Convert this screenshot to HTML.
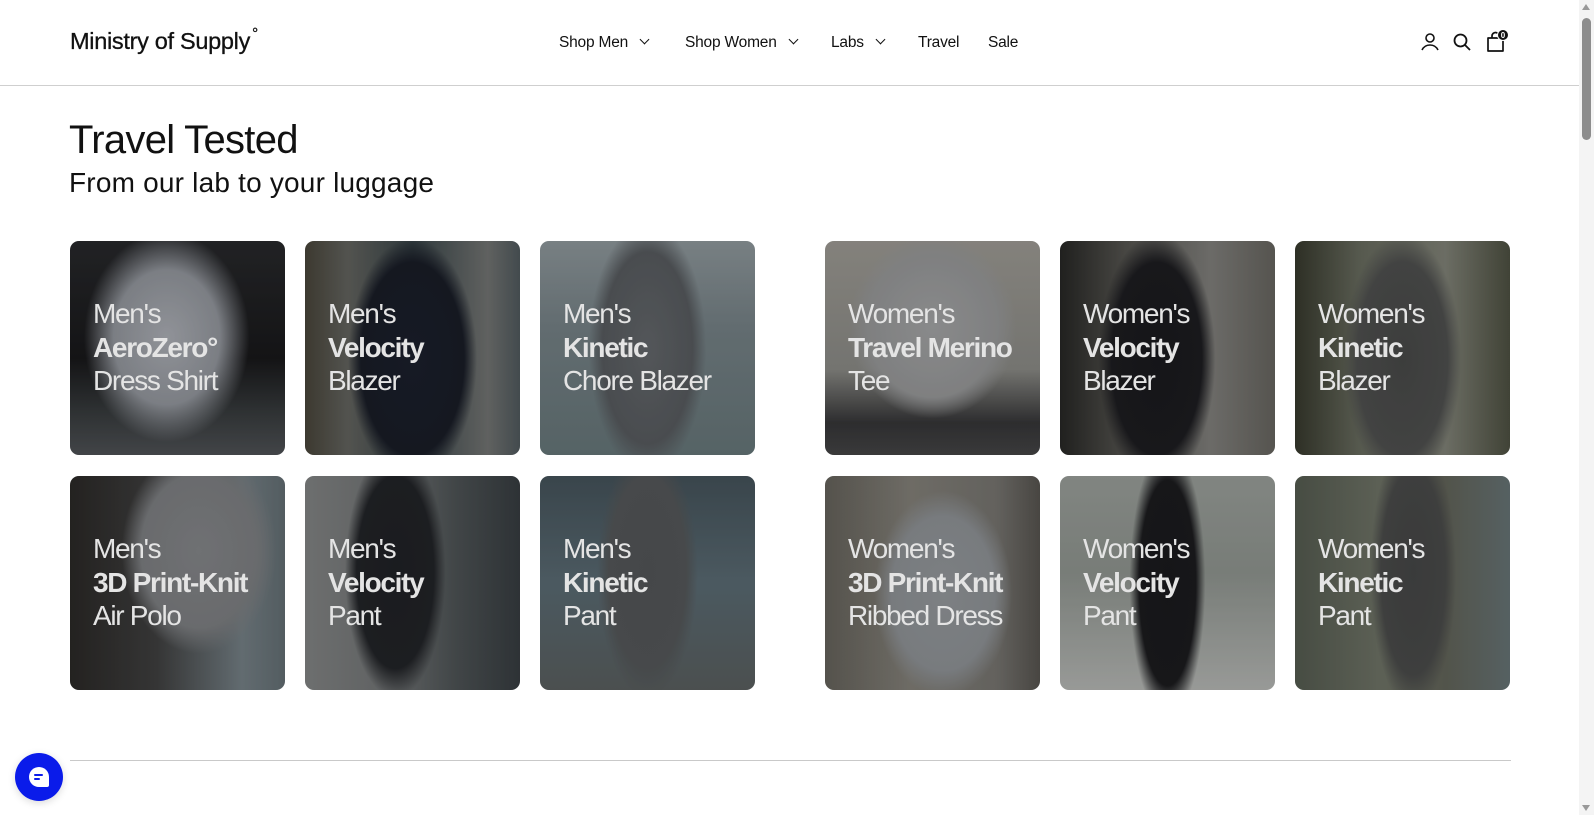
<!DOCTYPE html>
<html><head><meta charset="utf-8">
<style>
*{margin:0;padding:0;box-sizing:border-box}
html,body{width:1594px;height:815px;overflow:hidden;background:#fff;font-family:"Liberation Sans",sans-serif;color:#111}
.hdr{position:absolute;left:0;top:0;width:1579px;height:86px;border-bottom:1px solid #cfcfcf}
.logo{position:absolute;left:70px;top:27px;font-size:23.5px;letter-spacing:-0.3px;color:#111;-webkit-text-stroke:0.3px #111}
.logo sup{font-size:15px;position:relative;top:-2px;margin-left:2px}
.nav{position:absolute;top:34px;font-size:15.5px;letter-spacing:-0.2px}
.chev{display:inline-block;width:7px;height:7px;border-right:1.5px solid #111;border-bottom:1.5px solid #111;transform:rotate(45deg);margin-left:13px;position:relative;top:-4px}
h1{position:absolute;left:69px;top:118px;font-weight:400;font-size:40px;letter-spacing:-0.7px;color:#111}
h2{position:absolute;left:69px;top:167px;font-weight:400;font-size:28px;letter-spacing:0.2px;color:#111}
.card{position:absolute;width:215px;height:214px;border-radius:9px;overflow:hidden}
.card .ov{position:absolute;inset:0;background:rgba(0,0,0,0.22)}
.card .t{position:absolute;left:23px;top:56px;font-size:28px;line-height:33.5px;letter-spacing:-1.3px;color:#e4e4e4}
.card b{font-weight:700}
.sb{position:absolute;left:1579px;top:0;width:15px;height:815px;background:#f4f4f4}
.thumb{position:absolute;left:1582px;top:18px;width:9px;height:122px;background:#8d8d8d;border-radius:5px}
.chat{position:absolute;left:15px;top:753px;width:48px;height:48px;border-radius:50%;background:#0a1bea;box-shadow:0 2px 8px rgba(0,0,0,.15)}
.chat i{position:absolute;left:14px;top:14px;width:20px;height:20px;background:#fff;border-radius:50%;border-bottom-right-radius:2px}
.chat i:before,.chat i:after{content:"";position:absolute;left:5px;height:2px;background:#0a1bea;border-radius:1px}
.chat i:before{top:7px;width:9px}.chat i:after{top:11px;width:6px}
</style></head><body>
<div class="hdr">
<div class="logo">Ministry of Supply<sup>°</sup></div>
<div class="nav" style="left:559px">Shop Men<span class="chev"></span></div>
<div class="nav" style="left:685px">Shop Women<span class="chev"></span></div>
<div class="nav" style="left:831px">Labs<span class="chev"></span></div>
<div class="nav" style="left:918px">Travel</div>
<div class="nav" style="left:988px">Sale</div>
<svg style="position:absolute;left:1420px;top:32px" width="20" height="20" viewBox="0 0 20 20" fill="none" stroke="#111" stroke-width="1.6"><circle cx="10" cy="6" r="4"/><path d="M2 18c2-4 5-5 8-5s6 1 8 5"/></svg>
<svg style="position:absolute;left:1452px;top:32px" width="20" height="20" viewBox="0 0 20 20" fill="none" stroke="#111" stroke-width="1.8"><circle cx="8.5" cy="8.5" r="6"/><path d="M13 13l5 5"/></svg>
<svg style="position:absolute;left:1484px;top:28px" width="26" height="26" viewBox="0 0 26 26" fill="none" stroke="#111" stroke-width="1.7"><path d="M4 10h15v13H4z" stroke-linejoin="round"/><path d="M8 10V8a3.5 3.5 0 017 0v2"/><circle cx="19" cy="7" r="5.5" fill="#111" stroke="#fff" stroke-width="1"/><text x="19" y="10" font-size="8" fill="#fff" stroke="none" text-anchor="middle" font-family="Liberation Sans" font-weight="700">0</text></svg>
</div>
<h1>Travel Tested</h1>
<h2>From our lab to your luggage</h2>

<div class="card" style="left:70px;top:241px;background:radial-gradient(ellipse 55% 70% at 45% 45%,#b9bcc3 0%,#9ea2a9 45%,transparent 70%),linear-gradient(180deg,#2b2c2f 0%,#1a1a1c 55%,#3c4042 80%,#55585c 100%)"><div class="ov"></div><div class="t">Men's<br><b>AeroZero°</b><br>Dress Shirt</div></div>
<div class="card" style="left:305px;top:241px;background:radial-gradient(ellipse 40% 75% at 50% 55%,#1d2230 0%,#1b1f2a 60%,transparent 75%),linear-gradient(90deg,#4e4a3e 0%,#6a6b66 20%,#3d4a4e 50%,#7b7d7b 85%,#566064 100%)"><div class="ov"></div><div class="t">Men's<br><b>Velocity</b><br>Blazer</div></div>
<div class="card" style="left:540px;top:241px;background:radial-gradient(ellipse 35% 75% at 50% 50%,#6b6f73 0%,#5e6266 60%,transparent 78%),linear-gradient(180deg,#9aa4a8 0%,#7e8b90 40%,#6e7f82 100%)"><div class="ov"></div><div class="t">Men's<br><b>Kinetic</b><br>Chore Blazer</div></div>
<div class="card" style="left:825px;top:241px;background:radial-gradient(ellipse 50% 55% at 50% 40%,#b0b1b2 0%,#a3a4a5 60%,transparent 78%),linear-gradient(180deg,#a9a69f 0%,#959590 60%,#3a3a3c 85%,#4a4a4b 100%)"><div class="ov"></div><div class="t">Women's<br><b>Travel Merino</b><br>Tee</div></div>
<div class="card" style="left:1060px;top:241px;background:radial-gradient(ellipse 35% 75% at 45% 55%,#1c1c20 0%,#1f1f23 60%,transparent 78%),linear-gradient(90deg,#2a2a28 0%,#5b5a55 30%,#8a8985 70%,#6e6c66 100%)"><div class="ov"></div><div class="t">Women's<br><b>Velocity</b><br>Blazer</div></div>
<div class="card" style="left:1295px;top:241px;background:radial-gradient(ellipse 35% 75% at 50% 55%,#4e4f4e 0%,#555655 60%,transparent 78%),linear-gradient(90deg,#3b3d30 0%,#6f7365 30%,#8a8c80 70%,#535646 100%)"><div class="ov"></div><div class="t">Women's<br><b>Kinetic</b><br>Blazer</div></div>

<div class="card" style="left:70px;top:476px;background:radial-gradient(ellipse 45% 60% at 60% 35%,#8f9194 0%,#87898c 60%,transparent 80%),linear-gradient(90deg,#2e2c2a 0%,#444 40%,#7e8a90 80%,#6b777c 100%)"><div class="ov"></div><div class="t">Men's<br><b>3D Print-Knit</b><br>Air Polo</div></div>
<div class="card" style="left:305px;top:476px;background:radial-gradient(ellipse 30% 75% at 42% 45%,#222428 0%,#25272b 60%,transparent 78%),linear-gradient(90deg,#8c8e8e 0%,#7a7d7e 40%,#545a5c 70%,#3b4145 100%)"><div class="ov"></div><div class="t">Men's<br><b>Velocity</b><br>Pant</div></div>
<div class="card" style="left:540px;top:476px;background:radial-gradient(ellipse 30% 75% at 50% 45%,#595c5e 0%,#5b5e60 60%,transparent 78%),linear-gradient(180deg,#4a5961 0%,#61737c 50%,#606666 100%)"><div class="ov"></div><div class="t">Men's<br><b>Kinetic</b><br>Pant</div></div>
<div class="card" style="left:825px;top:476px;background:radial-gradient(ellipse 40% 60% at 55% 55%,#a0a4a8 0%,#9a9ea2 60%,transparent 80%),linear-gradient(90deg,#6d6a62 0%,#8d8a82 40%,#7f7d78 80%,#5d5a55 100%)"><div class="ov"></div><div class="t">Women's<br><b>3D Print-Knit</b><br>Ribbed Dress</div></div>
<div class="card" style="left:1060px;top:476px;background:radial-gradient(ellipse 22% 80% at 50% 50%,#1c1c1f 0%,#1e1e21 60%,transparent 80%),linear-gradient(180deg,#a6aba6 0%,#9aa09a 45%,#c3c5c2 100%)"><div class="ov"></div><div class="t">Women's<br><b>Velocity</b><br>Pant</div></div>
<div class="card" style="left:1295px;top:476px;background:radial-gradient(ellipse 25% 80% at 55% 45%,#4b4c4c 0%,#505150 60%,transparent 80%),linear-gradient(90deg,#5b6256 0%,#777c6e 40%,#6a6c60 70%,#6e7c7e 100%)"><div class="ov"></div><div class="t">Women's<br><b>Kinetic</b><br>Pant</div></div>

<div style="position:absolute;left:70px;top:760px;width:1441px;height:1px;background:#c9c9c9"></div>
<div class="chat"><i></i></div>
<div class="sb"></div><div class="thumb"></div>
<div style="position:absolute;left:1582px;top:4px;width:0;height:0;border-left:4px solid transparent;border-right:4px solid transparent;border-bottom:6px solid #999"></div>
<div style="position:absolute;left:1582px;top:805px;width:0;height:0;border-left:4px solid transparent;border-right:4px solid transparent;border-top:6px solid #999"></div>
</body></html>
